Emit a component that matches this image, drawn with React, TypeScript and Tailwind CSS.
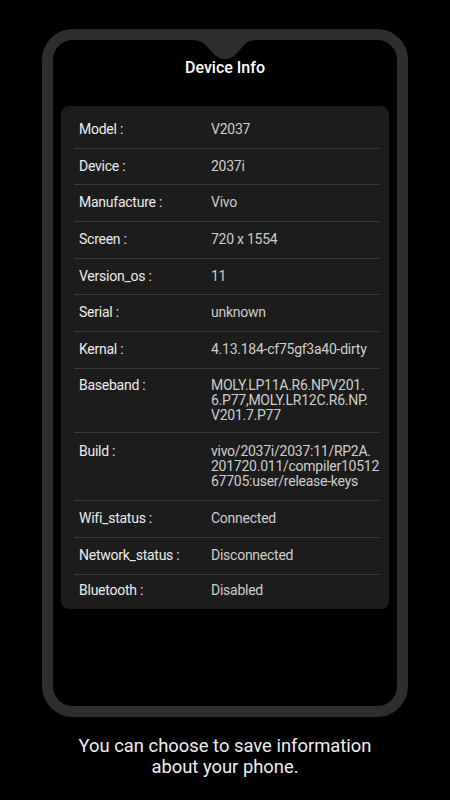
const ROWS: { label: string; value: string[]; pad?: string }[] = [
  { label: 'Model :', value: ['V2037'] },
  { label: 'Device :', value: ['2037i'] },
  { label: 'Manufacture :', value: ['Vivo'] },
  { label: 'Screen :', value: ['720 x 1554'] },
  { label: 'Version_os :', value: ['11'] },
  { label: 'Serial :', value: ['unknown'] },
  { label: 'Kernal :', value: ['4.13.184-cf75gf3a40-dirty'] },
  {
    label: 'Baseband :',
    value: ['MOLY.LP11A.R6.NPV201.', '6.P77,MOLY.LR12C.R6.NP.', 'V201.7.P77'],
    pad: 'pt-[9px] pb-[8px]',
  },
  {
    label: 'Build :',
    value: ['vivo/2037i/2037:11/RP2A.', '201720.011/compiler10512', '67705:user/release-keys'],
    pad: 'pt-[11px] pb-[11px]',
  },
  { label: 'Wifi_status :', value: ['Connected'] },
  { label: 'Network_status :', value: ['Disconnected'] },
  { label: 'Bluetooth :', value: ['Disabled'], pad: 'pt-[8px] pb-[8px]' },
]

function Notch() {
  return (
    <svg
      width="68"
      height="20"
      viewBox="0 0 68 20"
      className="absolute left-1/2 top-0 -translate-x-1/2"
    >
      <path
        d="M0 0 C12 0 14 4 20 11 C26 18 30 19 34 19 C38 19 42 18 48 11 C54 4 56 0 68 0 Z"
        fill="#2e2e2e"
      />
    </svg>
  )
}

function InfoRow({
  label,
  value,
  pad,
  last,
}: {
  label: string
  value: string[]
  pad?: string
  last: boolean
}) {
  const multi = value.length > 1
  return (
    <div
      className={`flex items-start pl-[5px] ${pad ?? 'py-[10px]'} ${
        last ? '' : 'border-b border-[#3d3d3d]'
      }`}
    >
      <div className="w-[132px] shrink-0 text-[14px] leading-[15.5px] tracking-[-0.25px] text-[#ececec]">
        {label}
      </div>
      <div className="flex-1 text-[14px] leading-[15.67px] tracking-[-0.25px] text-[#cdcdcd]">
        {value.map((line) => (
          <div key={line} className={multi ? 'leading-[15.3px]' : ''}>
            {line}
          </div>
        ))}
      </div>
    </div>
  )
}

export default function App() {
  return (
    <div className="h-[800px] w-[450px] overflow-hidden bg-black font-['Roboto',sans-serif] pt-[29px]">
      {/* Phone frame */}
      <div className="relative mx-auto h-[688px] w-[366px] rounded-[31px] border-[11px] border-[#2e2e2e] bg-black">
        <Notch />
        <h1 className="pt-[18px] text-center text-[16px] font-medium leading-[20px] text-white">
          Device Info
        </h1>

        {/* Info card */}
        <div className="mx-[8px] mt-[28px] rounded-[8px] bg-[#1c1c1c] pl-[13px] pr-[10px] pt-[6px] pb-[2px]">
          {ROWS.map((r, i) => (
            <InfoRow
              key={r.label}
              label={r.label}
              value={r.value}
              pad={r.pad}
              last={i === ROWS.length - 1}
            />
          ))}
        </div>
      </div>

      <p className="mt-[18px] text-center text-[18.4px] leading-[21px] text-[#eeeeee]">
        You can choose to save information
        <br />
        about your phone.
      </p>
    </div>
  )
}
